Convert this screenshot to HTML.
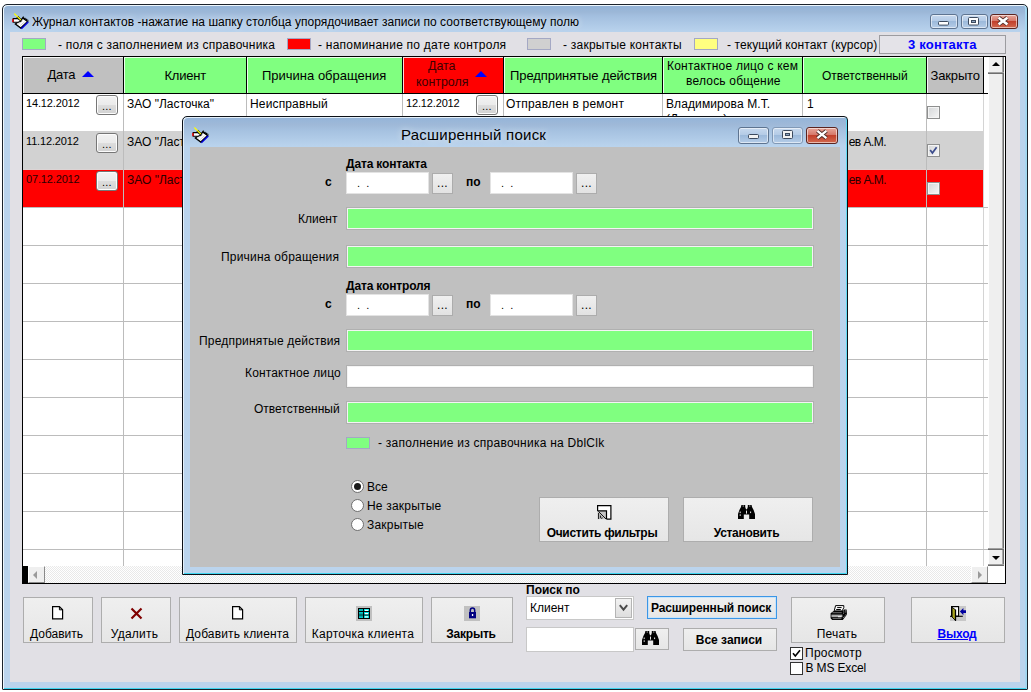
<!DOCTYPE html>
<html lang="ru">
<head>
<meta charset="utf-8">
<title>Журнал контактов</title>
<style>
*{box-sizing:border-box;margin:0;padding:0}
html,body{width:1031px;height:692px;overflow:hidden;background:#fff}
body{font-family:"Liberation Sans",sans-serif;font-size:12px;color:#000;position:relative}
.abs,.abs>*{position:absolute}
.t{position:absolute;white-space:nowrap;line-height:14px}
.b{font-weight:700}
/* main window */
#win{position:absolute;left:2px;top:4px;width:1026px;height:686px;border:1px solid #1c232c;border-radius:5px 5px 1px 1px;
 background:linear-gradient(#92b3d8 0,#9cb7d7 7px,#a3bfdf 11px,#b9d3ed 27px,#bbd4ed 100%);box-shadow:inset 1px 1px 0 0 #eef7fd,inset -1px 0 0 0 #9fd8f0,inset 0 -1px 0 0 #3ed6f0,inset -2px 0 0 0 #a8d6f0}
#client{position:absolute;left:10px;top:32px;width:1010px;height:650px;background:#e1e0e5}
.cap{position:absolute;height:15px;border:1px solid #5e7490;border-radius:3px;box-shadow:inset 0 0 0 1px rgba(255,255,255,.55)}
.cap.mn,.cap.mx{background:linear-gradient(#c7d9ee 0,#b4cbe6 45%,#9dbadb 50%,#b5cde8 100%)}
.cap.cl{background:linear-gradient(#e7a79b 0,#d6786a 45%,#c2402c 50%,#d2694f 100%);border-color:#5b2420}
/* legend */
.sw{position:absolute;top:38px;height:12px;width:24px;border:1px solid #a4a8c4}
/* grid */
#grid{position:absolute;left:22px;top:56px;width:984px;height:528px;background:#fff;border:1px solid #000;border-left-width:1px;overflow:hidden}
.h{position:absolute;top:0;height:36px;border-right:1px solid #000;box-shadow:inset 1px 1px 0 rgba(255,255,255,.85);display:flex;align-items:center;justify-content:center;text-align:center;font-size:13px;line-height:15px}
.ht{position:absolute;white-space:nowrap;font-size:13px;line-height:15px}
.tri{position:absolute;width:0;height:0;border-left:6px solid transparent;border-right:6px solid transparent;border-bottom:6px solid #0000ff}
.g{background:#80ff80}.gr{background:#c0c0c0}.r{background:#ff0000}
.row{position:absolute;left:0;width:960px;height:37px}
.vl{position:absolute;top:37px;width:1px;height:472px;background:#bcbcbc}
.hl{position:absolute;left:0;width:965px;height:1px;background:#bcbcbc}
.c{position:absolute;white-space:nowrap;font-size:12px;line-height:14px}
.c.s{font-size:11px;letter-spacing:-.15px}
.eb{position:absolute;width:22px;height:20px;border:1px solid #767676;border-radius:3px;background:linear-gradient(#f2f2f2 0,#ebebeb 48%,#dddddd 52%,#d2d2d2 100%);box-shadow:inset 0 0 0 1px #fcfcfc;font-size:11px;text-align:center;line-height:20px;letter-spacing:.2px}
.cb{position:absolute;width:13px;height:13px;border:1px solid #8e8f8f;background:linear-gradient(135deg,#d4d6d8,#f6f6f6);box-shadow:inset 0 0 0 1px #f4f4f4}
/* buttons */
.btn{position:absolute;border:1px solid #adadad;background:linear-gradient(#efefef,#e6e6e6);}
.btn .l{position:absolute;left:0;right:0;text-align:center;white-space:nowrap;line-height:14px}
/* dialog */
#dlg{position:absolute;left:182px;top:116px;width:666px;height:459px;border:1px solid #0c1016;border-radius:5px 4px 0 0;
 background:linear-gradient(#94b4d9 0,#9fb9d8 8px,#a5c1e0 13px,#b9d3ed 29px,#bbd4ed 100%);box-shadow:inset 1px 1px 0 0 #e4f0fa,inset -1px 0 0 0 #62dcf5,inset 0 -1px 0 0 #3ed6f0}
#dcl{position:absolute;left:190px;top:147px;width:650px;height:420px;background:#c0c0c0}
.f{position:absolute;left:346px;width:468px;height:23px;border:1px solid #b0b0b0;box-shadow:inset 0 0 0 1px #f4f4f4;background:#80ff80}
.f.w{background:#fff}
.d{position:absolute;width:83px;height:22px;background:#fff;border:1px solid #e3e3e3}
.db{position:absolute;width:21px;height:21px;border:1px solid #acacac;background:linear-gradient(#f0f0f0,#e2e2e2);font-size:12px;text-align:center;line-height:19px;letter-spacing:.3px}
.rd{position:absolute;width:13px;height:13px;border-radius:50%;border:1px solid #6e6e6e;background:#fff}
</style>
</head>
<body>
<div id="win"></div>
<div id="client"></div>

<!-- title -->
<svg style="position:absolute;left:12px;top:13px" width="17" height="17" viewBox="0 0 17 17">
<path d="M3.4 11 L11 5.2 L15.6 8.4 L8.8 15.1 Z" fill="#fff" stroke="#000" stroke-width="1.4"/>
 <path d="M6 11.4 L11 7.4 M8 12.6 L12.6 8.8" stroke="#c8c8c8" stroke-width=".8"/>
 <path d="M9.3 15.7 L16.3 8.9" stroke="#0000d8" stroke-width="1.5" fill="none"/>
 <path d="M10.6 4 L16.2 7.8" stroke="#000" stroke-width="1.8" stroke-dasharray="1.3 .8"/>
 <path d="M1.2 5.6 H5 L7.8 6.6 L8.8 8.2 L6 9.3 H1.2 Z" fill="#fff" stroke="#000" stroke-width="1.1"/>
 <rect x="0.2" y="5.9" width="1.4" height="3.2" fill="#f00000"/>
 <path d="M5.2 3.6 L9.4 7.8" stroke="#000" stroke-width="2.2"/>
 <path d="M2.3 0.5 L8.8 7" stroke="#ffff00" stroke-width="1.1"/>
</svg>
<div class="t" style="left:32px;top:15px;font-size:12px;letter-spacing:.03px;text-shadow:0 0 6px rgba(255,255,255,.65),0 0 11px rgba(255,255,255,.45),0 0 16px rgba(255,255,255,.25)">Журнал контактов -нажатие на шапку столбца упорядочивает записи по соответствующему полю</div>
<div class="cap mn" style="left:930px;top:14px;width:28px"><svg width="26" height="13" style="position:absolute;left:-1px;top:-1px"><rect x="8.5" y="7.5" width="10" height="3.6" rx="1" fill="#fff" stroke="#3c4a5e" stroke-width="1"/></svg></div>
<div class="cap mx" style="left:961px;top:14px;width:27px"><svg width="25" height="13" style="position:absolute;left:-1px;top:-1px"><rect x="7.5" y="3.5" width="10" height="7.5" rx="1" fill="#fff" stroke="#3c4a5e" stroke-width="1"/><rect x="10.5" y="6.5" width="4" height="2" fill="#8fa6c2" stroke="#3c4a5e" stroke-width="1"/></svg></div>
<div class="cap cl" style="left:990px;top:14px;width:28px"><svg width="26" height="13" style="position:absolute;left:-1px;top:-1px"><path d="M8.6 3.8 L17.4 10.4 M17.4 3.8 L8.6 10.4" stroke="#4a2a26" stroke-width="4.2" stroke-linecap="butt"/><path d="M8.6 3.8 L17.4 10.4 M17.4 3.8 L8.6 10.4" stroke="#fff" stroke-width="2.6"/></svg></div>

<!-- legend -->
<div class="sw" style="left:22px;background:#80ff80"></div>
<div class="t" style="left:58px;top:38px;letter-spacing:.23px">- поля с заполнением из справочника</div>
<div class="sw" style="left:287px;background:#ff0000"></div>
<div class="t" style="left:318px;top:38px;letter-spacing:.23px">- напоминание по дате контроля</div>
<div class="sw" style="left:527px;background:#d0d0d0"></div>
<div class="t" style="left:563px;top:38px;letter-spacing:.23px">- закрытые контакты</div>
<div class="sw" style="left:694px;background:#ffff80"></div>
<div class="t" style="left:727px;top:38px;letter-spacing:.1px">- текущий контакт (курсор)</div>
<div style="position:absolute;left:879px;top:35px;width:127px;height:19px;border:1px solid #9c9ca0;background:#e4e3e8"></div>
<div class="t b" style="left:908px;top:38px;font-size:13px;color:#0000ff;letter-spacing:.2px">3 контакта</div>

<!-- grid -->
<div id="grid">
 <div class="h gr" style="left:0;width:101px"></div>
 <div class="h g" style="left:101px;width:123px"></div>
 <div class="h g" style="left:224px;width:156px"></div>
 <div class="h r" style="left:380px;width:101px"></div>
 <div class="h g" style="left:481px;width:159px"></div>
 <div class="h g" style="left:640px;width:140px"></div>
 <div class="h g" style="left:780px;width:124px"></div>
 <div class="h gr" style="left:904px;width:57px"></div>
 <div class="ht" style="left:24.5px;top:10px;letter-spacing:-.25px">Дата</div>
 <div class="tri" style="left:58.5px;top:13.5px"></div>
 <div class="ht" style="left:141.5px;top:11px;letter-spacing:-.2px">Клиент</div>
 <div class="ht" style="left:239px;top:11px">Причина обращения</div>
 <div class="ht" style="left:405px;top:2px;font-size:12.4px;color:#3c0000">Дата</div>
 <div class="ht" style="left:393px;top:18px;font-size:12.4px;color:#3c0000">контроля</div>
 <div class="tri" style="left:451.5px;top:14px"></div>
 <div class="ht" style="left:487px;top:11px;letter-spacing:-.08px">Предпринятые действия</div>
 <div class="ht" style="left:644px;top:2px;font-size:12px;letter-spacing:.22px">Контактное лицо с кем</div>
 <div class="ht" style="left:663px;top:17px;font-size:12px;letter-spacing:.2px">велось общение</div>
 <div class="ht" style="left:799px;top:12px;font-size:12px">Ответственный</div>
 <div class="ht" style="left:907.5px;top:11px;letter-spacing:-.15px">Закрыто</div>
 <div style="position:absolute;left:0;top:36px;width:965px;height:1px;background:#000"></div>
 <div class="row" style="top:37px;background:#fff"></div>
 <div class="row gr" style="top:74px;height:38px;background:#d2d2d2"></div>
 <div class="row r" style="top:113px;height:37px"></div>
 <div class="hl" style="top:112px;width:960px;background:#dcd4d4"></div>
 <!-- column lines -->
 <div class="vl" style="left:100px"></div><div class="vl" style="left:223px"></div><div class="vl" style="left:379px"></div>
 <div class="vl" style="left:480px"></div><div class="vl" style="left:639px"></div><div class="vl" style="left:779px"></div>
 <div class="vl" style="left:903px"></div><div class="vl" style="left:960px;background:#d4d4d4"></div>
 <!-- row lines -->
 <div class="hl" style="top:150px"></div><div class="hl" style="top:188px"></div><div class="hl" style="top:226px"></div>
 <div class="hl" style="top:264px"></div><div class="hl" style="top:302px"></div><div class="hl" style="top:340px"></div>
 <div class="hl" style="top:378px"></div><div class="hl" style="top:416px"></div><div class="hl" style="top:454px"></div>
 <div class="hl" style="top:492px"></div>
 <!-- row 1 -->
 <div class="c s" style="left:3px;top:39px">14.12.2012</div><div class="eb" style="left:73px;top:38px">...</div>
 <div class="c" style="left:104px;top:40px">ЗАО "Ласточка"</div>
 <div class="c" style="left:227px;top:40px;letter-spacing:.15px">Неисправный</div>
 <div class="c s" style="left:383px;top:39px">12.12.2012</div><div class="eb" style="left:453px;top:38px">...</div>
 <div class="c" style="left:483px;top:40px;letter-spacing:.2px">Отправлен в ремонт</div>
 <div class="c" style="left:643px;top:40px;line-height:15px;letter-spacing:.1px">Владимирова М.Т.<br>(Директор)</div>
 <div class="c" style="left:784px;top:40px">1</div>
 <div class="cb" style="left:904px;top:49px"></div>
 <!-- row 2 -->
 <div class="c s" style="left:3px;top:77px">11.12.2012</div><div class="eb" style="left:73px;top:76px">...</div>
 <div class="c" style="left:104px;top:78px">ЗАО "Ласточка"</div>
 <div style="position:absolute;left:826px;top:78px;width:70px;height:15px;overflow:hidden"><div class="c" style="left:-38px;top:0;letter-spacing:-.5px">Васильев А.М.</div></div>
 <div class="cb" style="left:904px;top:87px"><svg width="11" height="11" viewBox="0 0 11 11" style="position:absolute;left:0;top:0"><path d="M2.2 5 L4.4 8 L8.6 2.2" stroke="#3c4c8c" stroke-width="1.7" fill="none"/></svg></div>
 <!-- row 3 -->
 <div class="c s" style="left:3px;top:115px;color:#2a0000">07.12.2012</div><div class="eb" style="left:73px;top:114px">...</div>
 <div class="c" style="left:104px;top:116px;color:#2a0000">ЗАО "Ласточка"</div>
 <div style="position:absolute;left:826px;top:116px;width:70px;height:15px;overflow:hidden"><div class="c" style="left:-38px;top:0;letter-spacing:-.5px;color:#2a0000">Васильев А.М.</div></div>
 <div class="cb" style="left:904px;top:125px"></div>
 <!-- vertical scrollbar -->
 <div style="position:absolute;left:965px;top:0;width:16px;height:509px;background:#efefef;border-left:1px solid #fff;box-shadow:inset -1px 0 0 #6e6e6e,inset -2px 0 0 #a8a8a8"></div>
 <div style="position:absolute;left:965px;top:15px;width:16px;height:1px;background:#a0a0a0"></div>
 <div style="position:absolute;left:965px;top:16px;width:16px;height:1px;background:#6e6e6e"></div>
 <div style="position:absolute;left:965px;top:491px;width:16px;height:1px;background:#a0a0a0"></div>
 <div style="position:absolute;left:965px;top:492px;width:16px;height:1px;background:#6e6e6e"></div>
 <div style="position:absolute;left:965px;top:507px;width:16px;height:1px;background:#a0a0a0"></div>
 <div style="position:absolute;left:965px;top:508px;width:16px;height:1px;background:#6e6e6e"></div>
 <div style="position:absolute;left:969px;top:5px;width:0;height:0;border-left:4px solid transparent;border-right:4px solid transparent;border-bottom:4px solid #000"></div>
 <div style="position:absolute;left:969px;top:499px;width:0;height:0;border-left:4px solid transparent;border-right:4px solid transparent;border-top:4px solid #000"></div>
 <!-- horizontal scrollbar -->
 <div style="position:absolute;left:0;top:509px;width:965px;height:17px;background-color:#fff;background-image:linear-gradient(45deg,#e9e9e9 25%,transparent 25%,transparent 75%,#e9e9e9 75%),linear-gradient(45deg,#e9e9e9 25%,transparent 25%,transparent 75%,#e9e9e9 75%);background-size:2px 2px;background-position:0 0,1px 1px"></div>
 <div style="position:absolute;left:0;top:509px;width:5px;height:17px;background:#000"></div>
 <div style="position:absolute;left:5px;top:509px;width:17px;height:17px;background:#efefef;border-top:1px solid #fff;border-left:1px solid #fff;border-right:1px solid #8a8a8a;border-bottom:1px solid #8a8a8a"></div>
 <div style="position:absolute;left:10px;top:514px;width:0;height:0;border-top:4px solid transparent;border-bottom:4px solid transparent;border-right:4px solid #9a9a9a"></div>
 <div style="position:absolute;left:948px;top:509px;width:17px;height:17px;background:#efefef;border-top:1px solid #fff;border-left:1px solid #fff;border-right:1px solid #8a8a8a;border-bottom:1px solid #8a8a8a"></div>
 <div style="position:absolute;left:955px;top:514px;width:0;height:0;border-top:4px solid transparent;border-bottom:4px solid transparent;border-left:4px solid #9a9a9a"></div>
</div>

<!-- dialog -->
<div id="dlg"></div>
<div id="dcl"></div>

<!-- dialog title -->
<svg style="position:absolute;left:192px;top:127px" width="17" height="17" viewBox="0 0 17 17">
<path d="M3.4 11 L11 5.2 L15.6 8.4 L8.8 15.1 Z" fill="#fff" stroke="#000" stroke-width="1.4"/>
 <path d="M6 11.4 L11 7.4 M8 12.6 L12.6 8.8" stroke="#c8c8c8" stroke-width=".8"/>
 <path d="M9.3 15.7 L16.3 8.9" stroke="#0000d8" stroke-width="1.5" fill="none"/>
 <path d="M10.6 4 L16.2 7.8" stroke="#000" stroke-width="1.8" stroke-dasharray="1.3 .8"/>
 <path d="M1.2 5.6 H5 L7.8 6.6 L8.8 8.2 L6 9.3 H1.2 Z" fill="#fff" stroke="#000" stroke-width="1.1"/>
 <rect x="0.2" y="5.9" width="1.4" height="3.2" fill="#f00000"/>
 <path d="M5.2 3.6 L9.4 7.8" stroke="#000" stroke-width="2.2"/>
 <path d="M2.3 0.5 L8.8 7" stroke="#ffff00" stroke-width="1.1"/>
</svg>
<div class="t" style="left:401px;top:126px;font-size:15px;line-height:18px;letter-spacing:.23px;text-shadow:0 0 6px rgba(255,255,255,.6),0 0 12px rgba(255,255,255,.4)">Расширенный поиск</div>
<div class="cap mn" style="left:738px;top:127px;width:31px;height:17px"><svg width="29" height="15" style="position:absolute;left:0;top:0"><rect x="9.5" y="6.5" width="10" height="4" rx="1" fill="#f2f2f2" stroke="#3c4a5e" stroke-width="1"/></svg></div>
<div class="cap mx" style="left:772px;top:127px;width:31px;height:17px;border-color:#8199b6"><svg width="29" height="15" style="position:absolute;left:0;top:0"><rect x="9.5" y="2.5" width="10" height="8" rx="1" fill="#f2f2f2" stroke="#3c4a5e" stroke-width="1"/><rect x="12.5" y="5.5" width="4" height="2" fill="#8fa6c2" stroke="#3c4a5e" stroke-width="1"/></svg></div>
<div class="cap cl" style="left:806px;top:127px;width:32px;height:17px"><svg width="30" height="15" style="position:absolute;left:0;top:0"><path d="M10.4 2.9 L19.4 10.1 M19.4 2.9 L10.4 10.1" stroke="#4a2a26" stroke-width="4" stroke-linecap="butt"/><path d="M10.4 2.9 L19.4 10.1 M19.4 2.9 L10.4 10.1" stroke="#fff" stroke-width="2.3"/></svg></div>

<!-- dialog body -->
<div class="t b" style="left:346px;top:157px;letter-spacing:-.15px">Дата контакта</div>
<div class="t b" style="left:325px;top:175px">с</div>
<div class="d" style="left:346px;top:172px"></div><div class="t" style="left:357px;top:176px;font-size:11px">.&nbsp;&nbsp;.</div>
<div class="db" style="left:432px;top:173px">...</div>
<div class="t b" style="left:466px;top:175px">по</div>
<div class="d" style="left:490px;top:172px"></div><div class="t" style="left:501px;top:176px;font-size:11px">.&nbsp;&nbsp;.</div>
<div class="db" style="left:576px;top:173px">...</div>

<div class="t" style="left:298px;top:212px">Клиент</div>
<div class="f" style="top:207px"></div>
<div class="t" style="left:221px;top:250px;letter-spacing:.2px">Причина обращения</div>
<div class="f" style="top:245px"></div>

<div class="t b" style="left:346px;top:279px;letter-spacing:-.15px">Дата контроля</div>
<div class="t b" style="left:325px;top:297px">с</div>
<div class="d" style="left:346px;top:294px"></div><div class="t" style="left:357px;top:298px;font-size:11px">.&nbsp;&nbsp;.</div>
<div class="db" style="left:432px;top:295px">...</div>
<div class="t b" style="left:466px;top:297px">по</div>
<div class="d" style="left:490px;top:294px"></div><div class="t" style="left:501px;top:298px;font-size:11px">.&nbsp;&nbsp;.</div>
<div class="db" style="left:576px;top:295px">...</div>

<div class="t" style="left:199px;top:334px;letter-spacing:.19px">Предпринятые действия</div>
<div class="f" style="top:329px"></div>
<div class="t" style="left:245px;top:366px;letter-spacing:.15px">Контактное лицо</div>
<div class="f w" style="top:365px"></div>
<div class="t" style="left:254px;top:402px">Ответственный</div>
<div class="f" style="top:401px"></div>

<div style="position:absolute;left:346px;top:437px;width:24px;height:12px;background:#80ff80;border:1px solid #a4a8c4"></div>
<div class="t" style="left:378px;top:436px;letter-spacing:.25px">- заполнение из справочника на DblClk</div>

<div class="rd" style="left:351px;top:480px"><div style="position:absolute;left:2px;top:2px;width:7px;height:7px;border-radius:50%;background:#1a1a1a"></div></div>
<div class="t" style="left:367px;top:480px">Все</div>
<div class="rd" style="left:351px;top:499px"></div>
<div class="t" style="left:367px;top:499px;letter-spacing:.2px">Не закрытые</div>
<div class="rd" style="left:351px;top:518px"></div>
<div class="t" style="left:367px;top:518px;letter-spacing:.2px">Закрытые</div>

<div class="btn" style="left:539px;top:497px;width:130px;height:45px"><div class="l b" style="top:28px;left:-4px;letter-spacing:-.3px">Очистить фильтры</div></div>
<div class="btn" style="left:683px;top:497px;width:130px;height:45px"><div class="l b" style="top:28px;left:-3px;letter-spacing:-.3px">Установить</div></div>

<!-- bottom bar -->
<div class="btn" style="left:23px;top:597px;width:70px;height:46px"><div class="l" style="top:29px;left:-3px">Добавить</div></div>
<div class="btn" style="left:101px;top:597px;width:70px;height:46px"><div class="l" style="top:29px;left:-3px;letter-spacing:.25px">Удалить</div></div>
<div class="btn" style="left:179px;top:597px;width:118px;height:46px"><div class="l" style="top:29px;left:-1px;letter-spacing:.15px">Добавить клиента</div></div>
<div class="btn" style="left:305px;top:597px;width:118px;height:46px"><div class="l" style="top:29px;left:-2px;letter-spacing:.27px">Карточка клиента</div></div>
<div class="btn" style="left:431px;top:597px;width:82px;height:46px"><div class="l b" style="top:29px;left:-2px;letter-spacing:-.2px">Закрыть</div></div>

<div class="t b" style="left:526px;top:583px">Поиск по</div>
<div style="position:absolute;left:526px;top:596px;width:108px;height:24px;background:#fff;border:1px solid #c8c8c8"></div>
<div class="t" style="left:530px;top:601px">Клиент</div>
<div style="position:absolute;left:615px;top:598px;width:17px;height:20px;border:1px solid #b4b4b4;background:linear-gradient(#f2f2f2,#dedede)"></div>
<div style="position:absolute;left:526px;top:627px;width:108px;height:25px;background:#fff;border:1px solid #c8c8c8"></div>
<div class="btn" style="left:635px;top:628px;width:34px;height:22px"></div>
<div class="btn" style="left:647px;top:596px;width:130px;height:23px;border-color:#3c96e6;box-shadow:inset 0 0 0 1px #c8e4fa"><div class="l b" style="top:4px;left:-2px;letter-spacing:-.15px">Расширенный поиск</div></div>
<div class="btn" style="left:683px;top:628px;width:94px;height:23px"><div class="l b" style="top:4px;left:-2px">Все записи</div></div>
<div class="btn" style="left:791px;top:597px;width:94px;height:46px"><div class="l" style="top:29px;left:-2px;letter-spacing:.2px">Печать</div></div>
<div class="btn" style="left:911px;top:597px;width:94px;height:46px"><div class="l b" style="top:29px;left:-2px;letter-spacing:-.2px;color:#0000ff;text-decoration:underline">Выход</div></div>
<div style="position:absolute;left:790px;top:647px;width:13px;height:13px;background:#fff;border:1px solid #333"></div>
<svg style="position:absolute;left:790px;top:647px" width="13" height="13" viewBox="0 0 13 13"><path d="M3 6.2 L5.3 9 L10 3.2" stroke="#000" stroke-width="1.6" fill="none"/></svg>
<div class="t" style="left:805px;top:646px;letter-spacing:.25px">Просмотр</div>
<div style="position:absolute;left:790px;top:662px;width:13px;height:13px;background:#fff;border:1px solid #333"></div>
<div class="t" style="left:805.5px;top:661px;letter-spacing:-.15px">В MS Excel</div>
<!-- icons -->
<svg style="position:absolute;left:52px;top:606px" width="12" height="14" viewBox="0 0 12 14"><path d="M0.6 0.6 H7.4 L10.6 3.8 V12.9 H0.6 Z" fill="#fff" stroke="#000" stroke-width="1.2"/><path d="M7.4 0.6 V3.8 H10.6" fill="none" stroke="#000" stroke-width="1"/></svg>
<svg style="position:absolute;left:130px;top:607px" width="13" height="13" viewBox="0 0 13 13"><path d="M1.5 1.5 L11.5 11.5 M11.5 1.5 L1.5 11.5" stroke="#800000" stroke-width="2.2" fill="none"/></svg>
<svg style="position:absolute;left:232px;top:606px" width="12" height="14" viewBox="0 0 12 14"><path d="M0.6 0.6 H7.4 L10.6 3.8 V12.9 H0.6 Z" fill="#fff" stroke="#000" stroke-width="1.2"/><path d="M7.4 0.6 V3.8 H10.6" fill="none" stroke="#000" stroke-width="1"/></svg>
<svg style="position:absolute;left:356px;top:606px" width="16" height="15" viewBox="0 0 16 15"><rect width="16" height="15" fill="#c0c0c0"/><rect x="2.5" y="2.5" width="11" height="10" fill="#00e0e0" stroke="#000" stroke-width="1"/><path d="M7.5 2.5 V12.5 M2.5 5.5 H13.5 M2.5 9 H13.5" stroke="#000" stroke-width="1" fill="none"/><rect x="9" y="3.8" width="3" height="1.2" fill="#fff"/><rect x="9" y="7" width="3" height="1.2" fill="#fff"/><rect x="9" y="10.3" width="3" height="1.2" fill="#fff"/><path d="M3.5 4 H6.5 M3.5 7.2 H6.5 M3.5 10.8 H6.5" stroke="#004040" stroke-width="1" stroke-dasharray="1 1"/></svg>
<svg style="position:absolute;left:464px;top:606px" width="16" height="15" viewBox="0 0 16 15"><rect width="16" height="15" fill="#c0c0c0"/><path d="M6.3 6.2 V4.4 A2.2 2.4 0 0 1 10.7 4.4 V6.2" fill="none" stroke="#000080" stroke-width="1.5"/><rect x="5" y="6" width="7" height="6.3" fill="#000080"/><rect x="7.9" y="8" width="1.3" height="2" fill="#fff"/></svg>
<svg style="position:absolute;left:830px;top:605px" width="18" height="16" viewBox="0 0 18 16">
<path d="M5.6 0.6 H13.8 V2.6 L12.2 5.9 H4.2 Z" fill="#fff" stroke="#000" stroke-width="1"/>
<path d="M7.2 2.6 H11.6 M6.2 4.5 H10.8" stroke="#000" stroke-width="1"/>
<path d="M0.6 8.2 L3.6 6 H13 L14.2 4.6 H16.6 L17 9.6 L12.8 15 H2.2 L0.6 13.2 Z" fill="#000"/>
<rect x="1.4" y="9.6" width="11" height="2.6" fill="#a8a8a8"/>
<rect x="8" y="11.3" width="3.4" height=".9" fill="#fff"/>
<path d="M2.4 7.7 H11.8 M2.6 13.6 H11.4" stroke="#8a8a8a" stroke-width=".8"/>
<path d="M13.2 7.2 L16.2 4.9 M13.4 8.6 L16.2 6.4 M13.3 13 L16.2 9.2" stroke="#b8b8b8" stroke-width=".9" stroke-dasharray="1 1"/>
</svg>
<svg style="position:absolute;left:950px;top:606px" width="16" height="15" viewBox="0 0 16 15">
<rect x="9.5" y="0" width="6.5" height="11" fill="#c8c8c8"/><rect x="0" y="10.6" width="16" height="4.4" fill="#c8c8c8"/>
<rect x="1.6" y="0.6" width="7" height="9.6" fill="#fff" stroke="#000" stroke-width="1.2"/>
<path d="M0 10.3 H12.8" stroke="#000" stroke-width="1.1"/>
<path d="M2.1 1.3 L5.5 3.9 V14.6 L2.1 11 Z" fill="#a8a41c" stroke="#000" stroke-width=".9"/>
<path d="M5.5 3.6 V14.8" stroke="#000" stroke-width="1.3"/>
<path d="M9.9 5.6 L13.4 2 V4.2 H16 V7 H13.4 V9.2 Z" fill="#0000a0"/>
</svg>
<svg style="position:absolute;left:642px;top:631px" width="17" height="14" viewBox="0 0 17 14">
<path d="M3.4 0 H7.2 V2 L8 4.2 H9 L9.8 2 V0 H13.6 L14 2 L15.6 5 L17 9 V14 H11.2 V9.6 H5.8 V14 H0 V9 L1.4 5 L3 2 Z" fill="#000"/>
<path d="M2.2 6.5 V12 M12.6 6.5 V9.2" stroke="#fff" stroke-width=".9" stroke-dasharray="1.6 1.2"/>
<path d="M4.6 1 H6 M11 1 H12.4" stroke="#d8d8d8" stroke-width=".8"/>
<rect x="8" y="5.6" width="1" height="3" fill="#e8e8e8"/>
</svg>
<svg style="position:absolute;left:738px;top:504.5px" width="17" height="14" viewBox="0 0 17 14">
<path d="M3.4 0 H7.2 V2 L8 4.2 H9 L9.8 2 V0 H13.6 L14 2 L15.6 5 L17 9 V14 H11.2 V9.6 H5.8 V14 H0 V9 L1.4 5 L3 2 Z" fill="#000"/>
<path d="M2.2 6.5 V12 M12.6 6.5 V9.2" stroke="#fff" stroke-width=".9" stroke-dasharray="1.6 1.2"/>
<path d="M4.6 1 H6 M11 1 H12.4" stroke="#d8d8d8" stroke-width=".8"/>
<rect x="8" y="5.6" width="1" height="3" fill="#e8e8e8"/>
</svg>
<svg style="position:absolute;left:597px;top:505px" width="15" height="15" viewBox="0 0 15 15">
<path d="M0.6 6 V0.6 H13.9 V14.2 H9.6" fill="#fff" stroke="#000" stroke-width="1.2"/>
<path d="M0.6 5.8 H9.5 V14.2 H0.6 Z" fill="#c4c4c4"/>
<path d="M0.6 5.8 H9.5 V14.2" fill="none" stroke="#000" stroke-width="1.2"/>
<path d="M1.6 6.6 L9 14 M1.6 8 V14 M3.6 10.6 V12.8 Q4.6 13.8 5.6 12.8" stroke="#000" stroke-width=".9" fill="none"/>
</svg>
<svg style="position:absolute;left:619px;top:604px" width="9" height="8" viewBox="0 0 9 8"><path d="M0.8 1.2 L4.5 5.6 L8.2 1.2" fill="none" stroke="#4a4a4a" stroke-width="2"/></svg>
</body>
</html>
